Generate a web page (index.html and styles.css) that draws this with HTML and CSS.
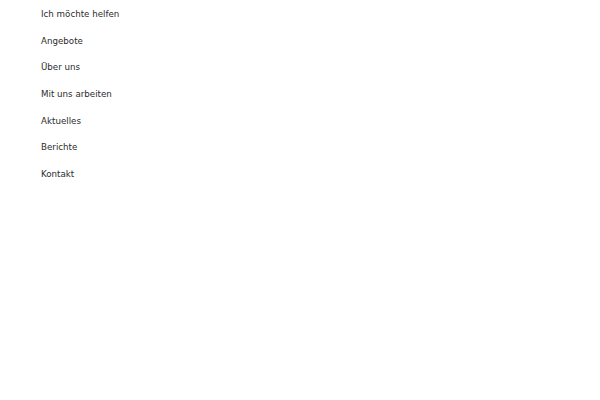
FILE: index.html
```html
<!DOCTYPE html>
<html lang="de">
<head>
<meta charset="utf-8">
<link rel="stylesheet" href="styles.css">
</head>
<body>
<nav class="menu">
  <ul class="menu-list">
    <li class="menu-item"><a href="#">Ich möchte helfen</a></li>
    <li class="menu-item"><a href="#">Angebote</a></li>
    <li class="menu-item"><a href="#">Über uns</a></li>
    <li class="menu-item"><a href="#">Mit uns arbeiten</a></li>
    <li class="menu-item"><a href="#">Aktuelles</a></li>
    <li class="menu-item"><a href="#">Berichte</a></li>
    <li class="menu-item"><a href="#">Kontakt</a></li>
  </ul>
</nav>
</body>
</html>
```
FILE: styles.css
```css
html, body {
  margin: 0;
  padding: 0;
  background: #ffffff;
}
body {
  font-family: "DejaVu Sans", sans-serif;
  font-size: 8.7px;
  color: #2b2b2b;
}
.menu-list {
  list-style: none;
  margin: 0;
  padding: 1px 0 0 41px;
}
.menu-item {
  height: 26.67px;
  line-height: 26.67px;
}
.menu-item a {
  color: #2b2b2b;
  text-decoration: none;
}
```
